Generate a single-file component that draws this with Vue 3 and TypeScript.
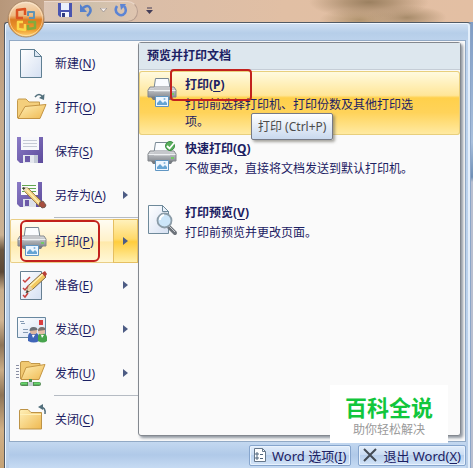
<script setup lang="ts">
interface MenuEntry {
  icon: string
  label: string
  key: string
  arrow?: boolean
  active?: boolean
  ruleAfter?: boolean
}

interface PrintEntry {
  icon: string
  title: string
  key: string
  text: string
  active?: boolean
}

const menu: MenuEntry[] = [
  { icon: 'page', label: '新建', key: 'N' },
  { icon: 'open', label: '打开', key: 'O' },
  { icon: 'disk', label: '保存', key: 'S' },
  { icon: 'saveas', label: '另存为', key: 'A', arrow: true, ruleAfter: true },
  { icon: 'printer', label: '打印', key: 'P', arrow: true, active: true },
  { icon: 'prepare', label: '准备', key: 'E', arrow: true },
  { icon: 'send', label: '发送', key: 'D', arrow: true },
  { icon: 'publish', label: '发布', key: 'U', arrow: true, ruleAfter: true },
  { icon: 'close', label: '关闭', key: 'C' },
]

const prints: PrintEntry[] = [
  { icon: 'printer', title: '打印', key: 'P', text: '打印前选择打印机、打印份数及其他打印选项。', active: true },
  { icon: 'quick', title: '快速打印', key: 'Q', text: '不做更改，直接将文档发送到默认打印机。' },
  { icon: 'preview', title: '打印预览', key: 'V', text: '打印前预览并更改页面。' },
]
</script>

<template>
  <svg class="defs" aria-hidden="true">
    <defs>
      <linearGradient id="gPaper" x1="0" y1="0" x2="1" y2="1">
        <stop offset="0" stop-color="#fff" /><stop offset="1" stop-color="#d5e0f2" />
      </linearGradient>
      <linearGradient id="gFolder" x1="0" y1="0" x2="1" y2="1">
        <stop offset="0" stop-color="#fff0b8" /><stop offset="1" stop-color="#efb951" />
      </linearGradient>
      <linearGradient id="gDisk" x1="0" y1="0" x2="1" y2="1">
        <stop offset="0" stop-color="#8b7cc6" /><stop offset="1" stop-color="#5d4b9c" />
      </linearGradient>
      <linearGradient id="gBody" x1="0" y1="0" x2="0" y2="1">
        <stop offset="0" stop-color="#e0e2e5" /><stop offset=".5" stop-color="#aeb1b6" /><stop offset="1" stop-color="#8b8f95" />
      </linearGradient>
      <linearGradient id="gOrb" x1="0" y1="0" x2="0" y2="1">
        <stop offset="0" stop-color="#f4dcc0" /><stop offset=".4" stop-color="#eebb82" /><stop offset=".52" stop-color="#dd7d22" /><stop offset=".8" stop-color="#ee9a2c" /><stop offset="1" stop-color="#ffd978" />
      </linearGradient>
      <symbol id="page" viewBox="0 0 32 32">
        <path d="M4.500 2.500h14l7 7v21h-21z" fill="url(#gPaper)" stroke="#5f7f93" />
        <path d="M18.500 2.500v7h7z" fill="#dce7f4" stroke="#5f7f93" />
      </symbol>
      <symbol id="open" viewBox="0 0 32 32">
        <path d="M1.500 27V9.500q0-1.500 1.500-1.500h7l3 3h10.500v5" fill="#f4cf7c" stroke="#c49a4a" />
        <path d="M2 27.500l7-12 21-2-6 14z" fill="url(#gFolder)" stroke="#c49443" />
        <path d="M19 6q4-5 8 0" fill="none" stroke="#526f7c" stroke-width="1.500" /><path d="M28.500 3l-.5 6-5-2z" fill="#526f7c" />
      </symbol>
      <symbol id="disk" viewBox="0 0 32 32">
        <path d="M1 2h26v26H4l-3-3z" fill="url(#gDisk)" />
        <path d="M5 2h18v13H5z" fill="#f7f8fb" /><path d="M7 5.500h14M7 8.500h14M7 11.500h14" stroke="#c5cad5" />
        <path d="M7 20h15v8H7z" fill="#e5e8ef" /><path d="M9 21h5v6H9z" fill="#6c5aa8" /><path d="M18 20h4v8h-4z" fill="#c4cad6" />
      </symbol>
      <symbol id="pencil" viewBox="0 0 32 32">
        <path d="M7 9l5 0 15 15-3 4L9 13z" fill="#f0cd80" stroke="#8e6937" stroke-width=".8" />
        <path d="M10 10l15 16" stroke="#fff0b1" stroke-width="1.500" />
        <path d="M7 9l5 0-3 4z" fill="#eee0be" /><path d="M6.500 8l3 1-2 2z" fill="#333" />
        <path d="M24 23l3-1 3 4q0 3-4 3l-3-3z" fill="#a74e3e" stroke="#66554c" stroke-width=".8" />
      </symbol>
      <symbol id="saveas" viewBox="0 0 32 32">
        <path d="M1 3h25v25H4l-3-3z" fill="url(#gDisk)" /><path d="M5 3h17v13H5z" fill="#fbfcfb" />
        <path d="M6 6.500h14M6 9.500h14M6 12.500h14" stroke="#63a651" /><path d="M7 20h13v8H7z" fill="#dce1ea" /><path d="M9 21h4v6H9z" fill="#6c5aa8" />
        <use href="#pencil" />
      </symbol>
      <symbol id="printer" viewBox="0 0 32 32">
        <path d="M9.500 2.500h13l1.500 10H8z" fill="#fafcff" stroke="#788894" />
        <path d="M4 11h24l2 3v7H2v-7z" fill="url(#gBody)" stroke="#83878c" />
        <path d="M8 11h16v5H8z" fill="#c5c7cb" /><path d="M2.500 14.500h27" stroke="#edf0f2" />
        <path d="M5 21h22l-2 3H7z" fill="#777c82" /><path d="M25 18h3" stroke="#73c966" stroke-width="2" />
        <path d="M9.500 20.500h13v10h-13z" fill="#edf6ff" stroke="#6096c3" />
        <path d="M11 27l3-3 3 3 2-2 2 2v2H11z" fill="#65a4d4" /><circle cx="18.500" cy="23" r="1" fill="#81b5dd" />
      </symbol>
      <symbol id="quick" viewBox="0 0 32 32">
        <use href="#printer" /><circle cx="24" cy="6" r="4.500" fill="#58ad5c" stroke="#3c8f46" /><path d="M21 6l2.500 2.500L28 3" fill="none" stroke="#fff" stroke-width="1.800" />
      </symbol>
      <symbol id="prepare" viewBox="0 0 32 32">
        <path d="M4.500 2.500h21v28h-21z" fill="url(#gPaper)" stroke="#667f92" />
        <path d="M7 11l2 2 5-5M7 19l2 2 4-5M7 26l2 2 3-4" fill="none" stroke="#c9413d" stroke-width="1.500" />
        <path d="M10 24l3-8L26 4l4 4-13 12z" fill="#f3ca60" stroke="#7f6844" /><path d="M14 17L27 5" stroke="#fff1b7" stroke-width="1.500" />
        <path d="M10 24l3-8 4 4z" fill="#e8d4ae" /><path d="M10 24l1-3 2 2z" fill="#333" /><path d="M26 4l3-2 2 3-2 3z" fill="#b84036" />
      </symbol>
      <symbol id="send" viewBox="0 0 32 32">
        <path d="M1.500 4.500h28v20h-28z" fill="url(#gPaper)" stroke="#68879f" /><path d="M4 8.500h4M5 10.500h4M7 16.500h5M7 19.500h5" stroke="#869bb5" /><path d="M23 7h4v5h-4z" fill="#d93e40" />
        <path d="M12 28v-4q0-5 5-5t6 5v4q-5 3-11 0z" fill="#4065b8" /><circle cx="17.500" cy="18" r="3.500" fill="#ddb6a0" /><path d="M13.500 18q0-4 4-4t4 3z" fill="#6b7077" />
        <path d="M22 28v-4q0-4 4-4t5 4v4q-4 3-9 0z" fill="#47a44d" /><circle cx="25.500" cy="18" r="3.500" fill="#e5bea7" /><path d="M22 18q0-4 4-4t3 3z" fill="#7d706c" /><path d="M16 22l1 3 2-3M25 22l1 3 2-3" fill="#fff" />
      </symbol>
      <symbol id="publish" viewBox="0 0 32 32">
        <path d="M0 8.500h3M0 11.500h3M0 14.500h3M0 17.500h3M0 20.500h3" stroke="#8a8fa4" />
        <path d="M4.500 22V6q0-1.500 1.500-1.500h7l2 2h9v5" fill="#f1c972" stroke="#c2984a" /><path d="M5 22.500l5-12 19-3-6 15z" fill="url(#gFolder)" stroke="#c59643" />
        <path d="M14.500 22v5" stroke="#4e8f50" stroke-width="3" /><path d="M6 27h17" stroke="#538b53" stroke-width="4" stroke-linecap="round" /><path d="M5 26.500h6M18 26.500h6" stroke="#65d66b" stroke-width="2" /><path d="M12 25h5v4h-5z" fill="#c7d0d4" />
      </symbol>
      <symbol id="close" viewBox="0 0 32 32">
        <path d="M3.500 26V8q0-1.500 1.500-1.500h7l3 3h10.500V26z" fill="url(#gFolder)" stroke="#bd9346" /><path d="M4 11.500h21" stroke="#fff0b8" />
        <path d="M29 11q1-7-5-7" fill="none" stroke="#526f7c" stroke-width="1.500" /><path d="M22 4l5-3v6z" fill="#526f7c" />
      </symbol>
      <symbol id="preview" viewBox="0 0 32 32">
        <path d="M2.500 1.500h14l6 6v22h-20z" fill="url(#gPaper)" stroke="#6e899a" /><path d="M16.500 1.500v6h6z" fill="#e9f1fb" stroke="#6e899a" />
        <path d="M23 23l6 6" stroke="#6d737a" stroke-width="4" stroke-linecap="round" /><path d="M23 22l6 6" stroke="#c8ccd0" />
        <circle cx="18.500" cy="16.500" r="7" fill="#cce6fa" stroke="#8b9ca8" stroke-width="1.800" /><path d="M14 16q0-4 4-5" fill="none" stroke="#fff" stroke-width="2" />
      </symbol>
    </defs>
  </svg>

  <div class="desktop">
    <header class="titlebar">
      <div class="quickbar">
        <button class="tool" aria-label="保存">
          <svg width="14" height="14" viewBox="0 0 14 14"><path d="M0 0h14v14H2l-2-2z" fill="#4a55b0" /><path d="M3 0h8v7H3z" fill="#e9effc" /><path d="M3 9h8v5H3z" fill="#f4f6fb" /><path d="M4 10h3v4H4z" fill="#303c80" /></svg>
        </button>
        <button class="tool" aria-label="撤消">
          <svg width="14" height="14" viewBox="0 0 14 14"><path d="M4 5q5-4 7 0t-3 8" fill="none" stroke="#5580cc" stroke-width="2.500" /><path d="M1 1v8h7z" fill="#5580cc" /></svg>
        </button>
        <svg width="7" height="5" viewBox="0 0 7 5"><path d="M0 0h7L3.500 4z" fill="#f6eee9" stroke="#8c8587" stroke-width=".7" /></svg>
        <button class="tool" aria-label="恢复">
          <svg width="14" height="14" viewBox="0 0 14 14"><path d="M3 3q-3 5 1 8t7-1q2-4-1-7" fill="none" stroke="#5c84d4" stroke-width="2.500" /><path d="M6 1h6L7 7z" fill="#5c84d4" /></svg>
        </button>
      </div>
      <button class="more" aria-label="自定义快速访问工具栏">
        <svg width="7" height="8" viewBox="0 0 7 8"><path d="M1 1h5" stroke="#443d58" /><path d="M0 3h7L3.500 7z" fill="#443d58" /></svg>
      </button>
    </header>

    <button class="orb" aria-label="Office 按钮">
      <svg width="38" height="38" viewBox="0 0 38 38">
        <circle cx="19" cy="19" r="18" fill="url(#gOrb)" stroke="#a98a6c" />
        <circle cx="19" cy="19" r="16.500" fill="none" stroke="#fff3df" stroke-opacity=".5" />
        <g fill="none" stroke-width="2.500" stroke-linejoin="round">
          <path d="M18 15V9l-8 1v8h6" stroke="#dc5322" /><path d="M21 16v-4h6v6h-5" stroke="#5f93b4" stroke-width="2" />
          <path d="M16 22h-5v7l7 1v-6" stroke="#fbd84c" /><path d="M21 22h7v6l-7 1v-4" stroke="#83ab3c" />
        </g>
      </svg>
    </button>

    <main class="office">
      <div class="content">
        <nav class="menu">
          <template v-for="m in menu" :key="m.key">
            <button class="entry" :class="{ active: m.active }">
              <svg class="icon" width="32" height="32"><use :href="'#' + m.icon" /></svg>
              <span class="label">{{ m.label }}(<u>{{ m.key }}</u>)</span>
              <span v-if="m.arrow" class="arrow"><svg width="5" height="8" viewBox="0 0 5 8"><path d="M0 0l5 4-5 4z" /></svg></span>
              <span v-if="m.active" class="mark"></span>
            </button>
            <div v-if="m.ruleAfter" class="rule"></div>
          </template>
        </nav>

        <section class="panel">
          <h2>预览并打印文档</h2>
          <button v-for="p in prints" :key="p.key" class="choice" :class="{ active: p.active }">
            <svg class="icon" width="32" height="32"><use :href="'#' + p.icon" /></svg>
            <span class="words">
              <strong>{{ p.title }}(<u>{{ p.key }}</u>)</strong>
              <span>{{ p.text }}</span>
            </span>
            <span v-if="p.active" class="mark"></span>
            <span v-if="p.active" class="tip" role="tooltip">打印 (Ctrl+P)</span>
          </button>
        </section>
      </div>

      <footer class="footer">
        <button class="command">
          <svg width="12" height="14" viewBox="0 0 12 14"><path d="M.5 .5h8l3 3v10H.5z" fill="#fff" stroke="#65778b" /><path d="M8.500 .5v3h3" fill="none" stroke="#65778b" /><path d="M2 5h2v2H2zM2 9h2v2H2z" fill="none" stroke="#4f647d" /><path d="M6 6.500h3M6 10.500h3" stroke="#4f647d" /></svg>
          <span>Word 选项(<u>I</u>)</span>
        </button>
        <button class="command">
          <svg width="14" height="14" viewBox="0 0 14 14"><path d="M1 1l12 12M13 1L1 13" stroke="#444b55" stroke-width="2" /></svg>
          <span>退出 Word(<u>X</u>)</span>
        </button>
        <aside class="badge"><b>百科全说</b><span>助你轻松解决</span></aside>
      </footer>
    </main>
  </div>
</template>

<style>
html,
body {
  margin: 0;
  overflow: hidden;
}
</style>

<style scoped>
.defs {
  position: absolute;
  width: 0;
  height: 0;
}
.desktop {
  position: relative;
  display: flex;
  flex-direction: column;
  box-sizing: border-box;
  min-height: 100vh;
  padding: 0 2px 0 4px;
  background: linear-gradient(#7f9cc4 0, #a9c0dd 120px, #6f8fb5 155px, #b9bfd0 160px, #b9bfd0 100%) right 22px / 4px 100% no-repeat,
    linear-gradient(#ddb99d 0, #b99778 22px, #c5a98a 110px, #cbb294 235px, #6b5640 250px, #5b4836 272px, #c9ad8a 290px, #d1b593 320px, #8d7457 345px, #c9ac86 370px, #8d7457 395px, #d1b086 430px, #c5a275 100%);
  font-family: "Noto Sans", "Noto Sans CJK SC", sans-serif;
  font-size: 12px;
  color: #1c2163;
}
button {
  margin: 0;
  padding: 0;
  border: 0;
  background: none;
  font: inherit;
  color: inherit;
  text-align: left;
}
svg {
  display: block;
  flex: none;
}
u {
  text-underline-offset: 2px;
}
.titlebar {
  display: flex;
  align-items: center;
  gap: 8px;
  height: 22px;
  margin: 0 -2px 0 -4px;
  background: radial-gradient(ellipse 60px 16px at 78% 10%, #9b8060, #a98c6ccc 40%, transparent),
    radial-gradient(ellipse 40px 12px at 86% 80%, #a78b6a, transparent),
    radial-gradient(ellipse 40px 12px at 76% 90%, #b1946f, transparent),
    linear-gradient(90deg, #b7977a, #d9bda8 25%, #e1bfa4 60%, #e3bfa3);
}
.quickbar {
  display: flex;
  align-items: center;
  gap: 7px;
  box-sizing: border-box;
  height: 21px;
  margin-left: 44px;
  padding: 0 9px 2px 14px;
  border: 1px solid #b79e90;
  border-left: 0;
  border-top-color: #ead7ca;
  border-radius: 0 12px 12px 0;
  background: linear-gradient(90deg, #dcc5b5, #cfc0ab 50%, #dfc5b0);
}
.orb {
  position: absolute;
  left: 7px;
  top: 0;
  z-index: 2;
  border-radius: 50%;
}
.office {
  flex: 1;
  display: flex;
  flex-direction: column;
  padding: 17px 5px 0 4px;
  border: solid #525a64;
  border-width: 1px 0 0 1px;
  border-radius: 3px 4px 0 0;
  box-shadow: inset 1px 1px #eef6ff, inset -1px 0 #8ba5c8, inset -3px 0 #e4effb;
  background: linear-gradient(#d2e1f3 0, #b6cee9 10px, #bdd3ed 18px, #b9cfe9 100%);
}
.content {
  display: flex;
  border: 1px solid #91a9c5;
  background: #fafafa;
}
.menu {
  flex: none;
  display: flex;
  flex-direction: column;
  width: 128px;
}
.entry {
  position: relative;
  display: flex;
  align-items: center;
  gap: 7px;
  height: 44px;
  padding-left: 6px;
}
.entry.active {
  border-radius: 2px;
  background: linear-gradient(#fffdf5, #fff1c9 50%, #ffe9a9 52%, #fff8da);
  box-shadow: inset 0 0 0 1px #e9ce86;
}
.label {
  flex: 1;
  white-space: nowrap;
}
.arrow {
  display: flex;
  align-items: center;
  justify-content: center;
  align-self: stretch;
  width: 25px;
  fill: #4d5c84;
}
.active .arrow {
  border: 1px solid #e5bf61;
  box-sizing: border-box;
  background: linear-gradient(#fff1bb, #ffd969 45%, #ffcd3d 52%, #ffefaa);
}
.rule {
  height: 1px;
  margin: 0 0 1px 44px;
  background: #b5bbc3;
}
.mark {
  position: absolute;
  box-sizing: border-box;
  border: 2px solid #c2211d;
  border-radius: 6px;
}
.entry .mark {
  left: 10px;
  top: 1px;
  width: 80px;
  height: 42px;
}
.panel {
  flex: 1;
  min-width: 0;
  margin: 1px 4px 5px 0;
  border: 1px solid #83888f;
  border-radius: 3px;
  background: #fafafa;
  box-shadow: 2px 2px 3px #8f969f;
}
h2 {
  margin: 0 0 1px;
  padding: 0 8px;
  border-bottom: 1px solid #c5cdd6;
  background: #dde7ee;
  font-size: 12px;
  line-height: 26px;
  font-weight: 700;
}
.choice {
  position: relative;
  display: flex;
  align-items: flex-start;
  gap: 7px;
  box-sizing: border-box;
  width: 100%;
  height: 64px;
  padding: 5px 40px 0 7px;
}
.choice.active {
  background: linear-gradient(#fffbe2, #ffe698 38%, #ffd04b 42%, #ffd35a 65%, #ffeba5);
  box-shadow: inset 0 0 0 1px #e8cf7d;
  border-radius: 3px;
}
.words {
  display: flex;
  flex-direction: column;
  gap: 2px;
  line-height: 17px;
}
.words strong {
  line-height: 18px;
}
.choice .mark {
  left: 31px;
  top: -2px;
  width: 82px;
  height: 32px;
  border-radius: 4px;
}
.tip {
  position: absolute;
  left: 112px;
  top: 42px;
  z-index: 1;
  padding: 0 6px;
  border: 1px solid #767a86;
  border-radius: 2px;
  background: linear-gradient(#fff, #c9d9ee);
  box-shadow: 2px 2px 3px #6b695f99;
  color: #4c4c4c;
  line-height: 25px;
  white-space: nowrap;
}
.footer {
  position: relative;
  flex: 1;
  display: flex;
  align-items: center;
  justify-content: flex-end;
  gap: 7px;
  min-height: 26px;
  background: linear-gradient(#c3d8f0, #b0c9e8 50%, #c6dbf3);
}
.command {
  display: flex;
  align-items: center;
  gap: 6px;
  height: 21px;
  padding: 0 4px;
  border: 1px solid #86a5cd;
  border-radius: 2px;
  background: linear-gradient(#e3eefb, #cbddf3 45%, #b9d0ec 50%, #d3e4f8);
  box-shadow: inset 0 0 0 1px #e8f2fd;
  font-size: 13px;
  white-space: nowrap;
}
.badge {
  position: absolute;
  right: 18px;
  bottom: 25px;
  display: flex;
  flex-direction: column;
  align-items: center;
  padding: 7px 15px 5px;
  background: #fff;
  color: #999;
  line-height: 16px;
}
.badge b {
  color: #12c63c;
  font-size: 22px;
  line-height: 30px;
}
</style>
